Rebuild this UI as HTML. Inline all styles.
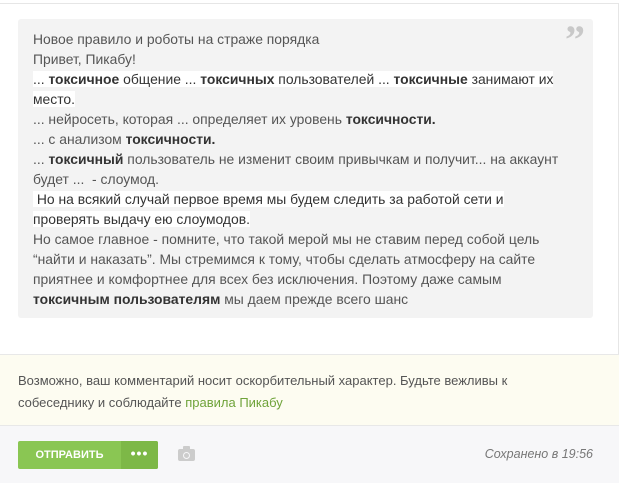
<!DOCTYPE html>
<html><head><meta charset="utf-8"><style>
body{margin:0;width:622px;height:490px;background:#fff;font-family:"Liberation Sans",sans-serif;position:relative;overflow:hidden}
.card{position:absolute;left:-2px;top:3px;width:621px;height:480px;border:1px solid #e6e6e6;border-left:none;box-sizing:border-box}
.quote{position:absolute;left:18px;top:19px;width:575px;height:299px;background:#f3f3f3;border-radius:3px}
.q{position:absolute;right:8px;top:1px;color:#c8c8c8;font-size:40px;font-weight:bold;font-family:"Liberation Serif",serif;line-height:40px}
.lines{position:absolute;left:15px;top:10px;font-size:13.9px;color:#555;line-height:20px;white-space:nowrap}
.lines div{height:20px}
.hl{background:#fff;color:#333}
b{color:#333}
.warn{position:absolute;left:0;top:354px;width:619px;height:72px;background:#fdfcf1;border-top:1px solid #e8e8e8;border-bottom:1px solid #e8e8e8;box-sizing:border-box;font-size:13px;color:#555;line-height:22px;padding:15px 18px}
.warn a{color:#6fa33a;text-decoration:none}
.foot{position:absolute;left:0;top:426px;width:619px;height:57px;background:#f7f7f9}
.btn{position:absolute;left:18px;top:15px;width:140px;height:28px;background:#8ac653;border-radius:2px;color:#fff;font-size:11px;font-weight:bold}
.btn span{position:absolute;left:0;width:103px;text-align:center;line-height:28px}
.btn i{position:absolute;left:103px;top:0;width:37px;height:28px;background:#7db847;border-radius:0 2px 2px 0;font-style:normal;text-align:center;line-height:24px;font-size:14px;letter-spacing:1px}
.cam{position:absolute;left:178px;top:23px;width:17px;height:12px;background:#ccc;border-radius:2px}
.cam:before{content:"";position:absolute;left:5px;top:-3px;width:7px;height:3px;background:#ccc;border-radius:1px 1px 0 0}
.cam:after{content:"";position:absolute;left:5px;top:3px;width:5px;height:5px;border:1px solid #f7f7f9;border-radius:50%}
.saved{position:absolute;right:26px;top:21px;font-size:12.5px;font-style:italic;color:#777}
</style></head><body>
<div class="card"></div>
<div class="quote"><div class="q">”</div>
<div class="lines">
<div>Новое правило и роботы на страже порядка</div>
<div>Привет, Пикабу!</div>
<div><span class="hl">... <b>токсичное</b> общение ... <b>токсичных</b> пользователей ... <b>токсичные</b> занимают их</span></div>
<div><span class="hl">место.</span></div>
<div>... нейросеть, которая ... определяет их уровень <b>токсичности.</b></div>
<div>... с анализом <b>токсичности.</b></div>
<div>... <b>токсичный</b> пользователь не изменит своим привычкам и получит... на аккаунт</div>
<div>будет ... &nbsp;- слоумод.</div>
<div><span class="hl">&nbsp;Но на всякий случай первое время мы будем следить за работой сети и</span></div>
<div><span class="hl">проверять выдачу ею слоумодов.</span></div>
<div>Но самое главное - помните, что такой мерой мы не ставим перед собой цель</div>
<div>“найти и наказать”. Мы стремимся к тому, чтобы сделать атмосферу на сайте</div>
<div>приятнее и комфортнее для всех без исключения. Поэтому даже самым</div>
<div><b>токсичным пользователям</b> мы даем прежде всего шанс</div>
</div></div>
<div class="warn">Возможно, ваш комментарий носит оскорбительный характер. Будьте вежливы к<br>собеседнику и соблюдайте <a>правила Пикабу</a></div>
<div class="foot">
<div class="btn"><span>ОТПРАВИТЬ</span><i>•••</i></div>
<div class="cam"></div>
<div class="saved">Сохранено в 19:56</div>
</div>
</body></html>
